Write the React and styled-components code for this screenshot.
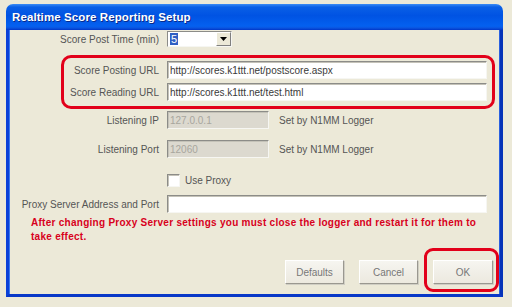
import React from 'react';
import styled, { createGlobalStyle } from 'styled-components';

const GlobalStyle = createGlobalStyle`
    html, body {
        margin: 0;
        padding: 0;
        background: #ece9d8;
    }
    body {
        font-family: "Liberation Sans", Arial, sans-serif;
    }
`;

const Page = styled.div`
    width: 512px;
    height: 307px;
    padding: 4px 0 0 6px;
    box-sizing: border-box;
    overflow: hidden;
`;

const Window = styled.div`
    width: 497px;
    display: flex;
    flex-direction: column;
`;

const TitleBar = styled.div`
    height: 26px;
    border-radius: 7px 7px 0 0;
    background: linear-gradient(
        to bottom,
        #3b8cf5 0%,
        #0a5fe6 12%,
        #0053e3 45%,
        #0461f0 85%,
        #0a55e0 92%,
        #0036c8 100%
    );
    color: #fff;
    font-weight: bold;
    font-size: 11.5px;
    display: flex;
    align-items: center;
    padding-left: 6px;
    letter-spacing: 0.1px;
    text-shadow: 1px 1px 0 #0a2a8a;
`;

const Client = styled.div`
    height: 264px;
    background: #ece9d8;
    border: 3px solid #0b3fd4;
    border-top: none;
    border-left-color: #0a41d8;
    border-right-color: #0633b8;
    border-bottom-color: #0838c8;
    box-shadow: inset 1px 0 0 #3a7af0, inset -1px 0 0 #2a60e0;
    display: flex;
    flex-direction: column;
    font-size: 10px;
    color: #555;
`;

const Row = styled.div`
    display: grid;
    grid-template-columns: ${p => p.$labelWidth || 150}px auto 1fr;
    column-gap: 8px;
    align-items: center;
    margin-top: ${p => p.$top || 0}px;
`;

const Label = styled.span`
    text-align: right;
    white-space: nowrap;
`;

const Highlight = styled.div`
    margin: 8px 5px 0 52px;
    border: 3px solid #e2001a;
    border-radius: 10px;
    padding: 3px 0 5px 0;
    display: flex;
    flex-direction: column;
    gap: 4px;
`;

const Field = styled.div`
    width: ${p => p.$width}px;
    height: 18px;
    box-sizing: border-box;
    border: 1px solid;
    border-color: #8c8c88 #f6f6f2 #f6f6f2 #8c8c88;
    box-shadow: inset 1px 1px 0 #c4c2b8;
    background: ${p => (p.$disabled ? '#dcd9cf' : '#fff')};
    color: ${p => (p.$disabled ? '#a8a69e' : '#3a3a3a')};
    padding: 0 0 0 2px;
    display: flex;
    align-items: center;
    white-space: nowrap;
    overflow: hidden;
`;

const Note = styled.span`
    white-space: nowrap;
    margin-left: 2px;
`;

const Select = styled.div`
    width: 65px;
    height: 16px;
    box-sizing: border-box;
    border: 1px solid;
    border-color: #8c8c88 #f6f6f2 #f6f6f2 #8c8c88;
    background: #fff;
    display: flex;
    align-items: center;
    padding-left: 2px;
`;

const Selected = styled.span`
    background: #2f5fc4;
    color: #fff;
    font-size: 11px;
    line-height: 12px;
    padding: 0 1px;
`;

const DropButton = styled.div`
    margin-left: auto;
    width: 13px;
    height: 12px;
    background: #ece9d8;
    border: 1px solid;
    border-color: #fff #808080 #808080 #fff;
    display: flex;
    align-items: center;
    justify-content: center;
`;

const CheckRow = styled.label`
    display: flex;
    align-items: center;
    gap: 5px;
`;

const CheckBox = styled.span`
    width: 13px;
    height: 13px;
    box-sizing: border-box;
    background: #fff;
    border: 1px solid;
    border-color: #8c8c88 #f6f6f2 #f6f6f2 #8c8c88;
    box-shadow: inset 1px 1px 0 #c4c2b8;
`;

const Warning = styled.p`
    margin: 3px 0 0 22px;
    font-weight: bold;
    color: #d8001c;
    line-height: 14px;
    width: 455px;
    letter-spacing: 0.27px;
`;

const ButtonRow = styled.div`
    margin-top: auto;
    margin-bottom: 2px;
    display: flex;
    justify-content: flex-end;
    align-items: flex-end;
    padding-right: 1px;
`;

const Button = styled.button`
    width: ${p => p.$width || 59}px;
    height: 24px;
    font-family: "Liberation Sans", Arial, sans-serif;
    font-size: 10px;
    color: #777;
    background: linear-gradient(to bottom, #f6f5f0, #ece9df);
    border: 1px solid;
    border-color: #ffffff #9a9890 #9a9890 #ffffff;
    box-shadow: 1px 1px 0 #d0cec4;
    margin: 0 0 ${p => p.$bottom || 0}px ${p => p.$left || 0}px;
    padding: 0;
`;

const Ring = styled.div`
    margin-left: 6px;
    border: 3px solid #e2001a;
    border-radius: 9px;
    padding: 9px 3px 5px 6px;
`;

function App() {
    return (
        <Page>
            <GlobalStyle />
            <Window>
                <TitleBar>Realtime Score Reporting Setup</TitleBar>
                <Client>
                    <Row $top={1}>
                        <Label>Score Post Time (min)</Label>
                        <Select>
                            <Selected>5</Selected>
                            <DropButton>
                                <svg width="7" height="4" viewBox="0 0 7 4">
                                    <path d="M0 0h7L3.5 4z" fill="#000" />
                                </svg>
                            </DropButton>
                        </Select>
                    </Row>

                    <Highlight>
                        <Row $labelWidth={95}>
                            <Label>Score Posting URL</Label>
                            <Field $width={320}>http://scores.k1ttt.net/postscore.aspx</Field>
                        </Row>
                        <Row $labelWidth={95}>
                            <Label>Score Reading URL</Label>
                            <Field $width={320}>http://scores.k1ttt.net/test.html</Field>
                        </Row>
                    </Highlight>

                    <Row $top={2}>
                        <Label>Listening IP</Label>
                        <Field $width={102} $disabled>127.0.0.1</Field>
                        <Note>Set by N1MM Logger</Note>
                    </Row>
                    <Row $top={11}>
                        <Label>Listening Port</Label>
                        <Field $width={102} $disabled>12060</Field>
                        <Note>Set by N1MM Logger</Note>
                    </Row>

                    <Row $top={16}>
                        <span />
                        <CheckRow>
                            <CheckBox />
                            Use Proxy
                        </CheckRow>
                    </Row>

                    <Row $top={8}>
                        <Label>Proxy Server Address and Port</Label>
                        <Field $width={320} />
                    </Row>

                    <Warning>
                        After changing Proxy Server settings you must close the logger and restart it for them to take effect.
                    </Warning>

                    <ButtonRow>
                        <Button $bottom={8}>Defaults</Button>
                        <Button $bottom={8} $left={15}>Cancel</Button>
                        <Ring>
                            <Button $width={60}>OK</Button>
                        </Ring>
                    </ButtonRow>
                </Client>
            </Window>
        </Page>
    );
}

export default App;
